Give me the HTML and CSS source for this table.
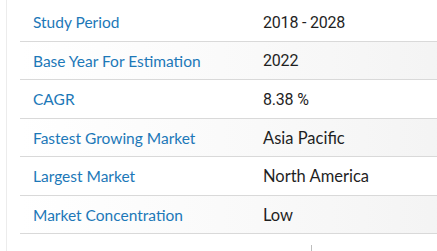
FILE: index.html
```html
<!DOCTYPE html>
<html>
<head>
<meta charset="utf-8">
<link rel="stylesheet" href="styles.css">
</head>
<body>
<div class="panel">
  <div class="table">
    <div class="row"><div class="label">Study Period</div><div class="value num">2018 - 2028</div></div>
    <div class="row alt"><div class="label">Base Year For Estimation</div><div class="value num">2022</div></div>
    <div class="row"><div class="label">CAGR</div><div class="value num">8.38 %</div></div>
    <div class="row alt"><div class="label">Fastest Growing Market</div><div class="value">Asia Pacific</div></div>
    <div class="row"><div class="label">Largest Market</div><div class="value">North America</div></div>
    <div class="row alt"><div class="label">Market Concentration</div><div class="value">Low</div></div>
  </div>
  <div class="below"><span class="tick"></span></div>
</div>
</body>
</html>
```

FILE: styles.css
```css
html, body {
  margin: 0;
  padding: 0;
  background: #fff;
}
.panel {
  margin-left: 6px;
  border-left: 1px solid #ececec;
  padding-left: 13px;
  padding-top: 3px;
  height: 251px;
  box-sizing: border-box;
  overflow: hidden;
}
.table {
  width: 480px;
}
.row {
  display: flex;
  height: 39px;
  align-items: center;
  border-bottom: 1px solid #d9d9d9;
  box-sizing: border-box;
}
.row:nth-child(2n) {
  height: 38px;
}
.alt {
  background: linear-gradient(to right, #ffffff 0%, #f9f9f9 50%, #f2f2f2 100%);
}
.label {
  width: 230px;
  box-sizing: border-box;
  padding-left: 13px;
  font-family: Lato, "Open Sans", sans-serif;
  font-size: 15.5px;
  color: #1c78b8;
}
.value {
  padding-left: 13px;
  font-family: Lato, "Open Sans", sans-serif;
  font-size: 16.5px;
  color: #1f1f1f;
}
.num {
  font-family: Roboto, "Liberation Sans", sans-serif;
  font-size: 16px;
  letter-spacing: -0.2px;
}
.below {
  position: relative;
  height: 18px;
}
.tick {
  position: absolute;
  left: 291px;
  top: 11px;
  width: 1px;
  height: 8px;
  background: #bdbdbd;
}
```
